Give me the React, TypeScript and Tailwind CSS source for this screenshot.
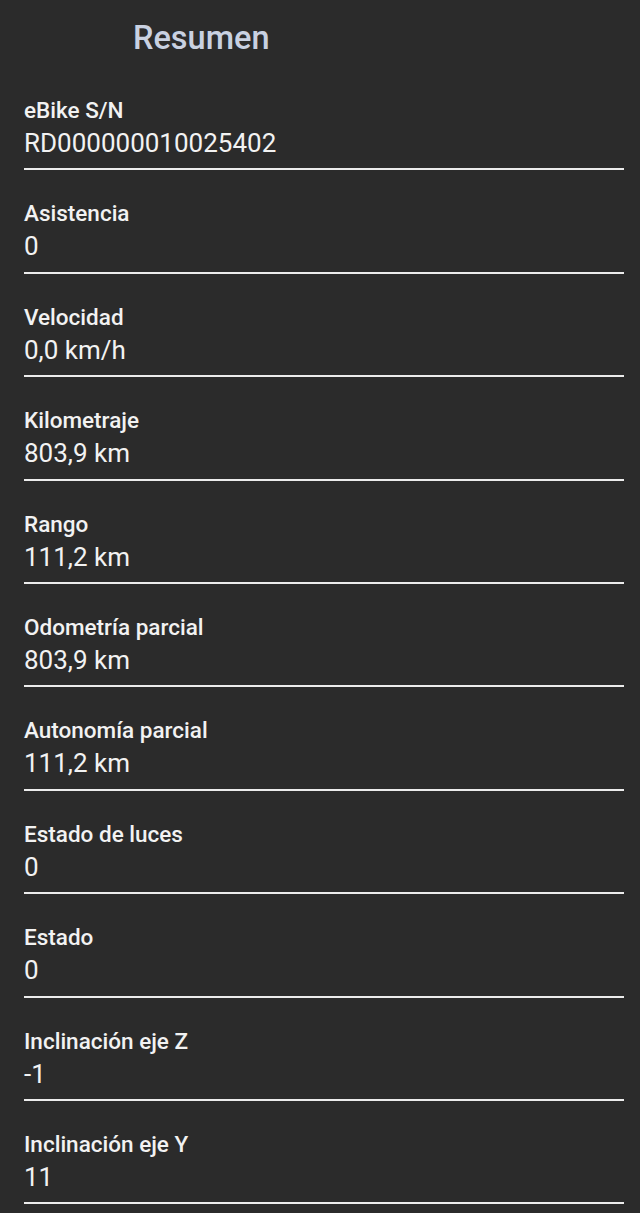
const rows: [string, string][] = [
  ["eBike S/N", "RD000000010025402"],
  ["Asistencia", "0"],
  ["Velocidad", "0,0 km/h"],
  ["Kilometraje", "803,9 km"],
  ["Rango", "111,2 km"],
  ["Odometría parcial", "803,9 km"],
  ["Autonomía parcial", "111,2 km"],
  ["Estado de luces", "0"],
  ["Estado", "0"],
  ["Inclinación eje Z", "-1"],
  ["Inclinación eje Y", "11"],
];

export default function App() {
  return (
    <div className="h-[1213px] bg-[#2b2b2b] pl-6 pr-4 font-['Roboto',sans-serif] overflow-hidden">
      <div className="h-[97px] pl-[109px] pt-[18px]">
        <h1 className="text-[32.5px] leading-[40px] font-medium text-[#c9d1e1]">Resumen</h1>
      </div>
      {rows.map(([label, value], i) => (
        <div key={i} className={i === 0 ? "" : "pt-[30px]"}>
          <div className="text-[22.5px] leading-[26px] font-medium text-[#f2f2f2]">{label}</div>
          <div className="mt-[5px] text-[26px] leading-[30px] text-[#f2f2f2]">{value}</div>
          <div className="mt-[10.4px] h-[2px] bg-[#ececec]" />
        </div>
      ))}
    </div>
  );
}
